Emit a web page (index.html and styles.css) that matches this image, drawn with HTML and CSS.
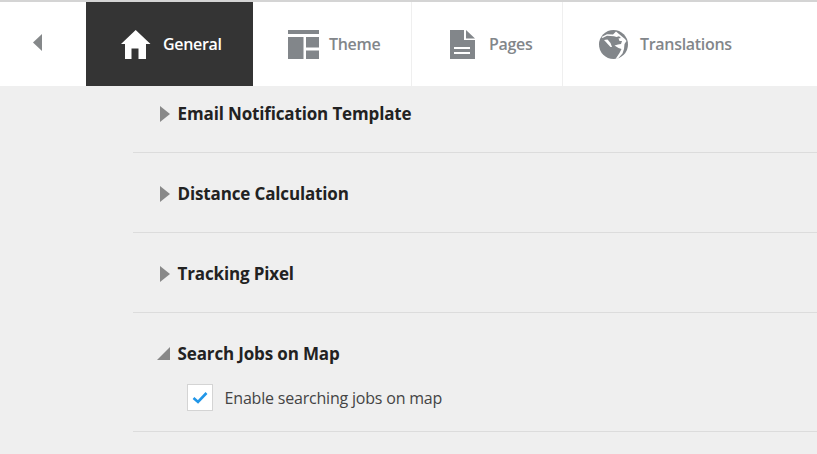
FILE: index.html
```html
<!DOCTYPE html>
<html lang="en">
<head>
<meta charset="utf-8">
<title>Settings</title>
<link rel="stylesheet" href="styles.css">
</head>
<body>
<nav class="tabs">
  <a class="back"><svg width="9" height="17" viewBox="0 0 9 17"><path d="M9 0V17L0 8.5Z"/></svg></a>
  <a class="tab tab-general active">
    <svg width="30" height="29" viewBox="0 0 30 29"><path d="M14.7 0 29.5 14H25V29H17.5V18.5H10.5V29H4V14H0Z"/></svg>
    <span>General</span>
  </a>
  <a class="tab tab-theme">
    <svg width="31" height="29" viewBox="0 0 31 29"><path d="M0 0H31V4H0ZM0 7H15.5V29H0ZM18 7H31V17.5H18ZM18 20.5H31V29H18Z"/></svg>
    <span>Theme</span>
  </a>
  <a class="tab tab-pages">
    <svg width="25" height="29" viewBox="0 0 25 29"><path fill-rule="evenodd" d="M0 0H14V10H25V29H0ZM4 17V19H20V17ZM4 22V24H20V22ZM16 0 25 8.5H16Z"/></svg>
    <span>Pages</span>
  </a>
  <a class="tab tab-translations">
    <svg width="29" height="29" viewBox="0 0 29 29">
      <circle cx="14.5" cy="14.5" r="14.5"/>
      <path class="globe-gap" d="M2.5 7 8 4.3 14 4.5 17 1.5 20 4 26 9 27.5 11 25.5 14 25 19 23.5 23.5 19 28.5 16.5 29 20.5 23 22.5 19 19.5 18 15.5 15.5 19 14.5 22 14 23 11 20.5 11 19.5 8.5 22 8 20 6.2 17.5 7 15 6.2 8 5.8 3.5 8Z"/>
      <path class="globe-gap" d="M5 10 8.5 9.5 11.5 13 13 17 11.5 17Z"/>
    </svg>
    <span>Translations</span>
  </a>
</nav>
<main class="sections">
  <section class="row first">
    <h2 class="heading"><i class="arrow"></i>Email Notification Template</h2>
  </section>
  <section class="row">
    <h2 class="heading"><i class="arrow"></i>Distance Calculation</h2>
  </section>
  <section class="row">
    <h2 class="heading"><i class="arrow"></i>Tracking Pixel</h2>
  </section>
  <section class="row open">
    <h2 class="heading"><i class="arrow arrow-open"></i>Search Jobs on Map</h2>
    <label class="check">
      <span class="box"><svg width="16" height="13" viewBox="0 0 16 13"><path d="M1.5 7 6 11 14.5 2" fill="none" stroke="#2196e8" stroke-width="2.6"/></svg></span>
      Enable searching jobs on map
    </label>
  </section>
</main>
</body>
</html>
```
FILE: styles.css
```css
* { box-sizing: border-box; }
html, body { margin: 0; height: 100%; }
body {
  background: #efefef;
  font-family: "Open Sans", "Liberation Sans", sans-serif;
  overflow: hidden;
}
.tabs {
  display: flex;
  height: 86px;
  background: #fff;
  border-top: 2px solid #d4d4d4;
}
.back {
  width: 86px;
  display: flex;
  align-items: center;
  padding-left: 33px;
  padding-bottom: 3px;
}
.back svg { fill: #85888a; }
.tab {
  display: flex;
  align-items: center;
  color: #82868a;
  font-size: 16px;
  font-weight: 600;
  letter-spacing: -0.3px;
  border-right: 1px solid #efefef;
}
.tab svg { fill: #82868a; flex: none; }
.tab .globe-gap { fill: #fff; }
.tab-general { width: 167px; padding-left: 35px; gap: 12px; border-right: 0; }
.tab-theme { width: 159px; padding-left: 35px; gap: 10px; }
.tab-pages { width: 151px; padding-left: 38px; gap: 14px; }
.tab-translations { padding-left: 36px; gap: 12px; border-right: 0; }
.active { background: #343434; color: #fff; }
.active svg { fill: #fff; }
.sections { margin-left: 133px; }
.row {
  height: 80px;
  padding-top: 30px;
  border-bottom: 1px solid #dcdcdc;
}
.row.first { height: 67px; padding-top: 17px; }
.row.open { height: 119px; }
.heading {
  display: flex;
  align-items: center;
  height: 22px;
  margin: 0;
  padding-left: 44.6px;
  position: relative;
  font-size: 17px;
  line-height: 22px;
  font-weight: 700;
  letter-spacing: -0.15px;
  color: #222;
}
.arrow {
  position: absolute;
  left: 27px;
  top: 3px;
  width: 0;
  height: 0;
  border-style: solid;
  border-width: 8px 0 8px 10px;
  border-color: transparent transparent transparent #888;
}
.arrow-open {
  left: 24px;
  top: 4px;
  border-width: 0 0 13px 13px;
  border-color: transparent transparent #888 transparent;
}
.check {
  display: flex;
  align-items: center;
  margin: 19px 0 0 54px;
  gap: 11.6px;
  font-size: 16px;
  letter-spacing: -0.2px;
  color: #444;
}
.box {
  display: flex;
  align-items: center;
  justify-content: center;
  width: 26px;
  height: 27px;
  background: #fff;
  border: 1px solid #d4d4d4;
}
```
